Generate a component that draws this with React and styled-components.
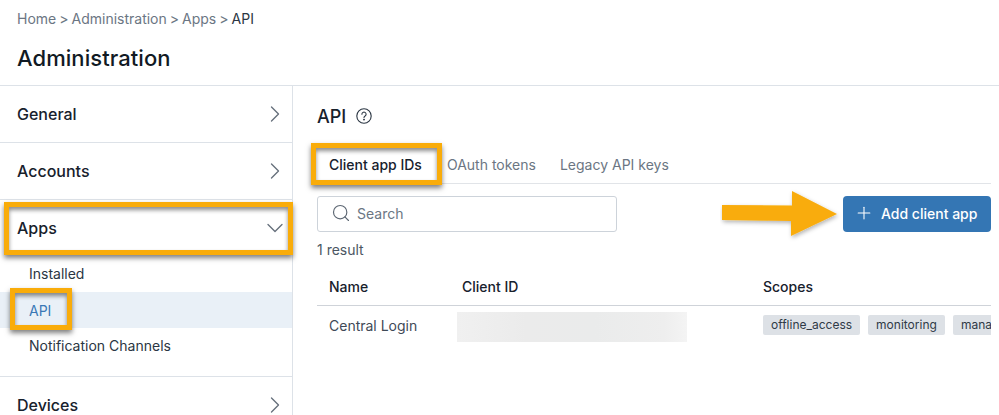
import React from "react";
import styled, { createGlobalStyle, css } from "styled-components";
import { ChevronRight, ChevronDown, Search, Plus } from "lucide-react";

const Global = createGlobalStyle`
  html, body { margin: 0; padding: 0; background: #fff; }
  body { width: 999px; height: 415px; overflow: hidden; font-family: Inter, "Liberation Sans", sans-serif; color: #111a24; }
  * { box-sizing: border-box; }
`;

const Page = styled.div`
  width: 999px;
  height: 415px;
  overflow: hidden;
  position: relative;
  display: flex;
  flex-direction: column;
`;
const Header = styled.header`
  height: 86px;
  flex: none;
  padding: 10px 17px 0;
  border-bottom: 1px solid #dde2e8;
`;
const Crumbs = styled.nav`
  display: flex;
  align-items: center;
  height: 17px;
  font-size: 14px;
  color: #6b7683;
`;
const Sep = styled.span`
  margin: 0 3px;
  font-size: 14px;
`;
const Current = styled.span`
  color: #2b3643;
`;
const Title = styled.h1`
  margin: 17px 0 0;
  font-size: 22px;
  line-height: 28px;
  font-weight: 500;
  letter-spacing: 0.06px;
  color: #111a24;
`;
const Body = styled.div`
  flex: 1;
  display: flex;
  min-height: 0;
`;
const Sidebar = styled.aside`
  width: 293px;
  flex: none;
  border-right: 1px solid #dde2e8;
`;
const Group = styled.div`
  position: relative;
  border-bottom: 1px solid #dde2e8;
  &:last-child { border-bottom: 0; }
`;
const GroupHead = styled.div`
  height: 56px;
  display: flex;
  align-items: center;
  justify-content: space-between;
  padding: 0 3px 0 17px;
  font-size: 16px;
  font-weight: 500;
  color: #17212c;
  svg { color: #66707c; }
`;
const SubList = styled.div`
  padding-bottom: 12px;
`;
const SubItem = styled.div`
  position: relative;
  height: 36px;
  display: flex;
  align-items: center;
  padding-left: 29px;
  padding-bottom: ${(p) => (p.$active ? 0 : 2)}px;
  font-size: 14px;
  color: ${(p) => (p.$active ? "#3a78b5" : "#2b3643")};
  background: ${(p) => (p.$active ? "#e9f0f7" : "transparent")};
`;
const highlight = css`
  position: absolute;
  border: 5px solid #f9ac0a;
  pointer-events: none;
  box-shadow: 0 3px 5px rgba(0, 0, 0, 0.5), inset 0 3px 4px rgba(0, 0, 0, 0.45);
`;
const AppsMark = styled.div`
  ${highlight}
  left: 4px;
  top: 2px;
  width: 289px;
  height: 53px;
`;
const ApiMark = styled.div`
  ${highlight}
  left: 10px;
  top: -4px;
  width: 62px;
  height: 42px;
`;
const TabMark = styled.div`
  ${highlight}
  left: -6px;
  top: -12px;
  width: 131px;
  height: 42px;
`;
const Main = styled.main`
  flex: 1;
  min-width: 0;
  padding: 0 8px 0 24px;
`;
const Heading = styled.div`
  display: flex;
  align-items: center;
  height: 28px;
  margin-top: 16px;
  font-size: 18px;
  font-weight: 500;
  color: #17212c;
  gap: 10px;
`;
const Tabs = styled.div`
  display: flex;
  height: 45px;
  margin-top: 9px;
  border-bottom: 1px solid #e1e4e8;
  align-items: flex-start;
  padding-top: 16px;
`;
const Tab = styled.div`
  position: relative;
  font-size: 14px;
  line-height: 20px;
  white-space: nowrap;
  padding: 0 ${(p) => (p.$active ? 13 : 12)}px 0 12px;
  font-weight: ${(p) => (p.$active ? 500 : 400)};
  color: ${(p) => (p.$active ? "#17212c" : "#6b7683")};
`;
const Toolbar = styled.div`
  display: flex;
  justify-content: space-between;
  margin-top: 12px;
`;
const SearchBox = styled.div`
  width: 300px;
  height: 36px;
  display: flex;
  align-items: center;
  gap: 6px;
  padding: 0 0 2px 13px;
  border: 1px solid #cdd3da;
  border-radius: 3px;
  font-size: 14px;
  color: #6b7683;
  svg { color: #5d6773; }
`;
const AddButton = styled.button`
  width: 148px;
  height: 36px;
  display: flex;
  align-items: center;
  gap: 7px;
  border: 0;
  border-radius: 4px;
  background: #3476b4;
  color: #fff;
  font: 500 14px Inter, "Liberation Sans", sans-serif;
  padding: 0 0 2px 11px;
`;
const Count = styled.div`
  margin-top: 9px;
  font-size: 14px;
  line-height: 17px;
  color: #4c5763;
`;
const TableHead = styled.div`
  display: grid;
  grid-template-columns: 133px 301px 1fr;
  align-items: center;
  height: 38px;
  margin-top: 10px;
  padding-left: 12px;
  border-bottom: 1px solid #cfd3d9;
  font-size: 14px;
  font-weight: 500;
  color: #17212c;
`;
const TableRow = styled.div`
  display: grid;
  grid-template-columns: 128px 306px 1fr;
  align-items: center;
  height: 38px;
  padding-left: 12px;
  font-size: 14px;
  color: #3f4a57;
`;
const Redacted = styled.div`
  width: 230px;
  height: 30px;
  margin-top: 4px;
  background: linear-gradient(90deg, #f0f0f0, #ebebeb 30%, #eaebeb 60%, #eeeeee 90%, #f4f4f4);
`;
const TagRow = styled.div`
  display: flex;
  gap: 8px;
  overflow: hidden;
  white-space: nowrap;
`;
const Tag = styled.span`
  flex: none;
  height: 20px;
  line-height: 20px;
  padding: 0 8px;
  background: #dde1e6;
  border-radius: 2px;
  font-size: 12px;
  color: #2f3a47;
`;
const Arrow = styled.svg`
  position: absolute;
  left: 720px;
  top: 188px;
`;

const Chevron = () => <ChevronRight size={28} strokeWidth={1.15} />;

export default function App() {
  return (
    <Page>
      <Global />
      <Header>
        <Crumbs>
          <span>Home</span><Sep>&gt;</Sep>
          <span>Administration</span><Sep>&gt;</Sep>
          <span>Apps</span><Sep>&gt;</Sep>
          <Current>API</Current>
        </Crumbs>
        <Title>Administration</Title>
      </Header>
      <Body>
        <Sidebar>
          <Group><GroupHead>General<Chevron /></GroupHead></Group>
          <Group><GroupHead>Accounts<Chevron /></GroupHead></Group>
          <Group>
            <GroupHead>Apps<ChevronDown size={28} strokeWidth={1.15} /></GroupHead>
            <AppsMark />
            <SubList>
              <SubItem>Installed</SubItem>
              <SubItem $active>API<ApiMark /></SubItem>
              <SubItem>Notification Channels</SubItem>
            </SubList>
          </Group>
          <Group><GroupHead>Devices<Chevron /></GroupHead></Group>
        </Sidebar>
        <Main>
          <Heading>
            API
            <svg width="16" height="16" viewBox="0 0 16 16" fill="none" stroke="#2b3643" strokeWidth="1.1">
              <circle cx="8" cy="8" r="7.2" />
              <path d="M5.9 6.2a2.1 2.1 0 1 1 3.2 1.8c-.7.45-1.1.8-1.1 1.6" strokeLinecap="round" />
              <circle cx="8" cy="11.6" r=".4" fill="#2b3643" />
            </svg>
          </Heading>
          <Tabs>
            <Tab $active>Client app IDs<TabMark /></Tab>
            <Tab>OAuth tokens</Tab>
            <Tab>Legacy API keys</Tab>
          </Tabs>
          <Toolbar>
            <SearchBox><Search size={20} strokeWidth={1.4} />Search</SearchBox>
            <AddButton><Plus size={20} strokeWidth={1.3} />Add client app</AddButton>
          </Toolbar>
          <Count>1 result</Count>
          <TableHead><span>Name</span><span>Client ID</span><span>Scopes</span></TableHead>
          <TableRow>
            <span>Central Login</span>
            <Redacted />
            <TagRow><Tag>offline_access</Tag><Tag>monitoring</Tag><Tag>manage</Tag></TagRow>
          </TableRow>
        </Main>
      </Body>
      <Arrow width="124" height="56" viewBox="0 0 124 56">
        <defs>
          <filter id="arrowShadow" x="-10%" y="-20%" width="120%" height="140%">
            <feDropShadow dx="1" dy="2" stdDeviation="2" floodColor="#000" floodOpacity="0.3" />
          </filter>
        </defs>
        <path d="M2 17 L72 17.5 L72 3 L117 26 L71 48 L71 33 L2 32 Z" fill="#f9ac0a" filter="url(#arrowShadow)" />
      </Arrow>
    </Page>
  );
}
